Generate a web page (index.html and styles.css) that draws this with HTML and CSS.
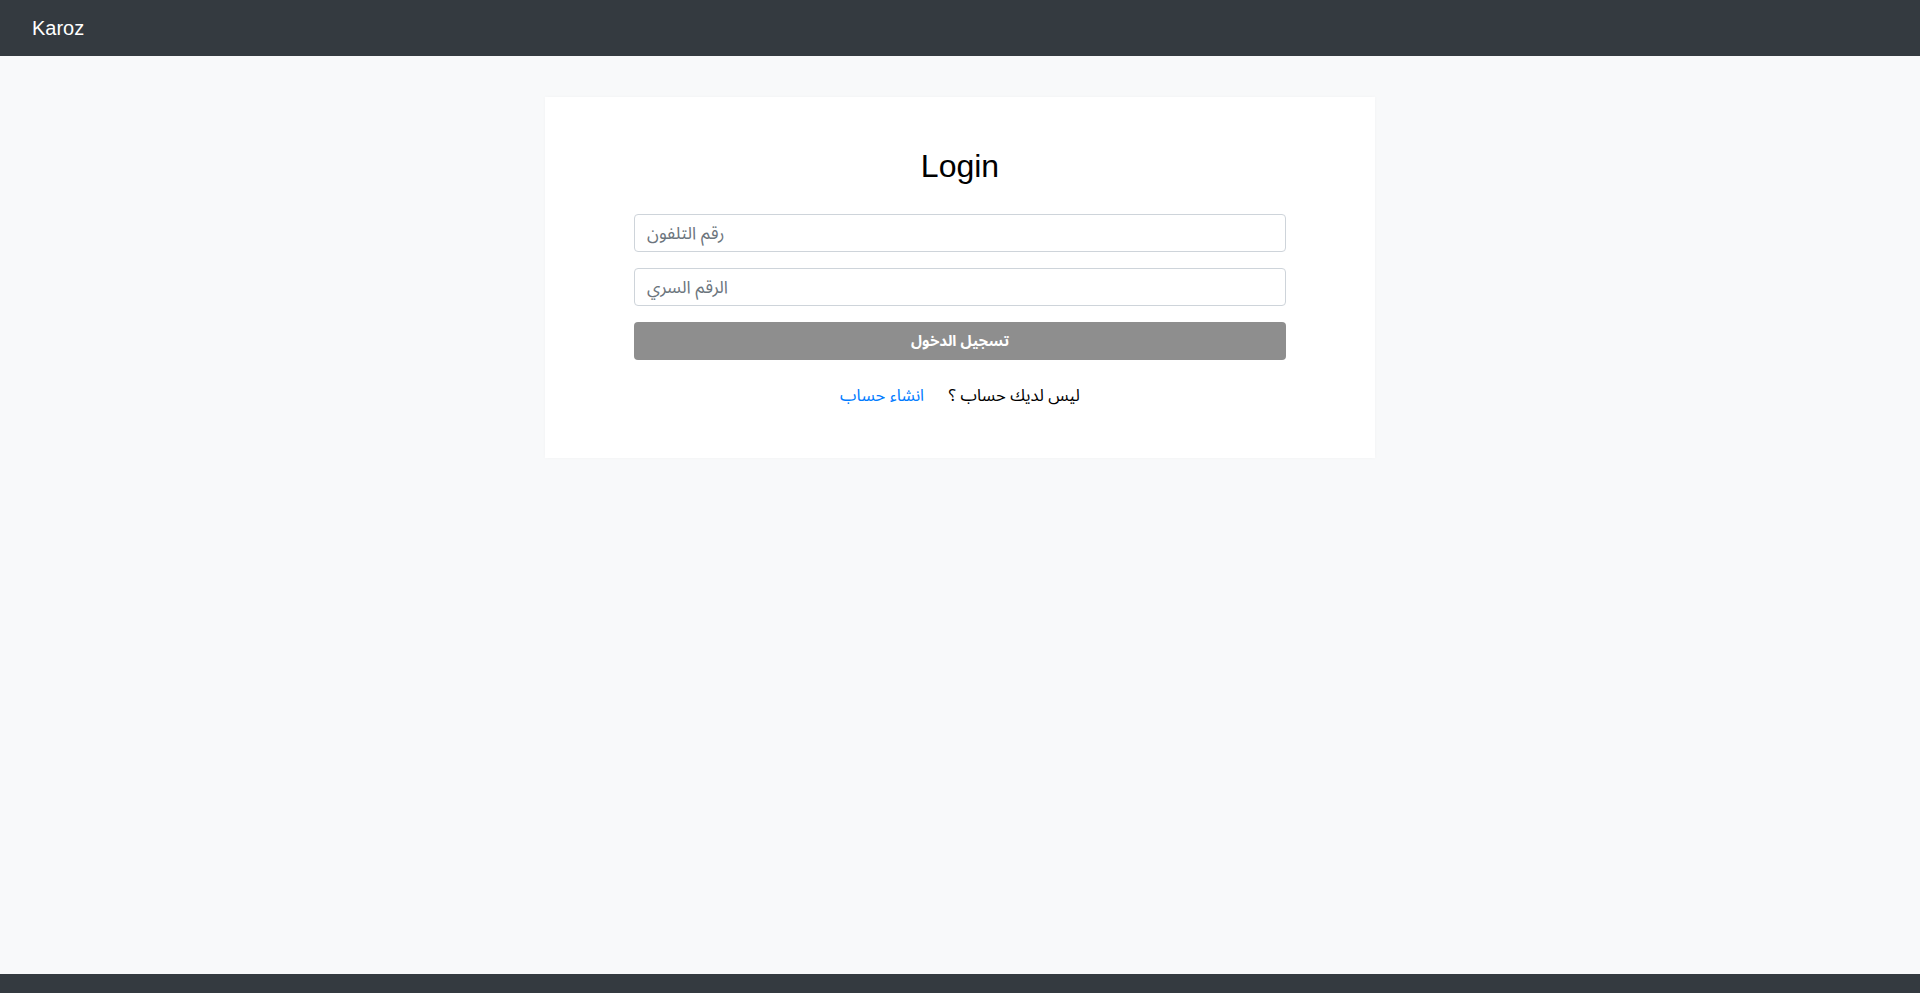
FILE: index.html
```html
<!DOCTYPE html>
<html lang="ar">
<head>
<meta charset="utf-8">
<title>Karoz - Login</title>
<link rel="stylesheet" href="styles.css">
</head>
<body>
<header class="navbar">
  <a class="brand" href="#">Karoz</a>
</header>
<main class="page">
  <section class="card">
    <h2 class="title">Login</h2>
    <form class="form">
      <input class="field" type="text" placeholder="رقم التلفون">
      <input class="field" type="password" placeholder="الرقم السري">
      <button class="btn" type="button">تسجيل الدخول</button>
    </form>
    <p class="signup" dir="rtl">ليس لديك حساب ؟ <a class="link" href="#">انشاء حساب</a></p>
  </section>
</main>
<footer class="footer"></footer>
</body>
</html>
```

FILE: styles.css
```css
* { box-sizing: border-box; }
html, body { height: 100%; }
body {
  margin: 0;
  font-family: "Liberation Sans", "Noto Sans Arabic", "Noto Sans Arabic UI", "DejaVu Sans", sans-serif;
  font-size: 16px;
  line-height: 1.5;
  color: #212529;
  background: #f8f9fa;
  display: flex;
  flex-direction: column;
}
.navbar {
  height: 56px;
  background: #343a40;
  display: flex;
  align-items: center;
  padding: 0 32px;
  flex: 0 0 auto;
}
.brand {
  color: #fff;
  font-size: 20px;
  text-decoration: none;
  line-height: 30px;
}
.page {
  flex: 1 1 auto;
  display: flex;
  justify-content: center;
  align-items: flex-start;
  padding-top: 41px;
}
.card {
  width: 830px;
  background: #fff;
  box-shadow: 0 0 4px rgba(0, 0, 0, 0.03);
  padding: 50px 89px 50px;
  text-align: center;
}
.title {
  margin: 0 0 29px;
  font-size: 32px;
  font-weight: 400;
  line-height: 1.2;
  color: #000;
}
.form {
  display: flex;
  flex-direction: column;
  gap: 16px;
}
.field {
  height: 38px;
  width: 100%;
  border: 1px solid #ced4da;
  border-radius: 4px;
  padding: 6px 12px;
  font-family: inherit;
  font-size: 17.4px;
  color: #495057;
  background: #fff;
  outline: none;
}
.field::placeholder { color: #6c757d; opacity: 1; }
.btn {
  height: 38px;
  width: 100%;
  border: 0;
  border-radius: 4px;
  background: #8e8e8e;
  color: #fff;
  font-family: inherit;
  font-size: 15px;
  font-weight: 700;
  cursor: pointer;
}
.signup {
  margin: 24px 0 0;
  color: #000;
  font-size: 16.6px;
  line-height: 24px;
}
.link {
  color: #007bff;
  text-decoration: none;
  margin-right: 20px;
}
.footer {
  flex: 0 0 19px;
  background: #343a40;
}
```
